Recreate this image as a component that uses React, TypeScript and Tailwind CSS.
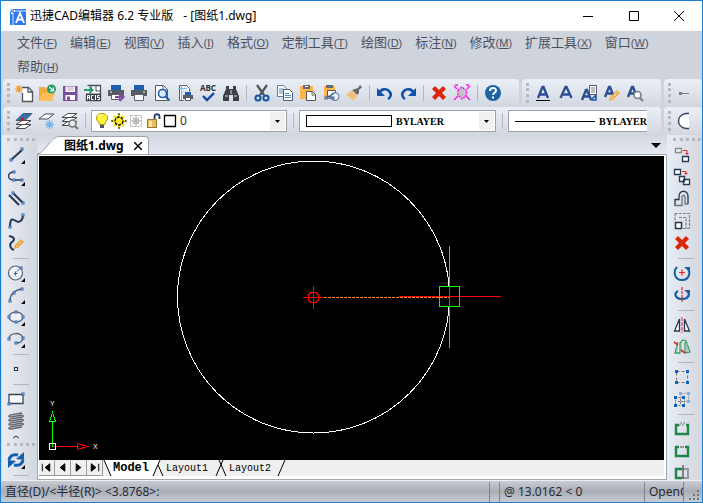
import React from 'react';

type Kids = { children: React.ReactNode };

const Glyph = ({ children }: Kids) => (
  <svg viewBox="0 0 18 18" className="h-[18px] w-[18px] shrink-0 overflow-visible" fill="none" aria-hidden="true">
    {children}
  </svg>
);

const Node = ({ x, y }: { x: number; y: number }) => (
  <rect x={x - 1} y={y - 1} width="2" height="2" fill="#fff" stroke="#2f62a8" />
);

const Corner = () => <path d="M18 14v4h-4z" fill="#000" />;

const navy = '#26384f';

const icons: Record<string, React.ReactNode> = {
  // ---------- standard toolbar ----------
  new: (
    <>
      <path d="M7 3.500H13.500L17.500 7.500V17.500H7.500V9" fill="#fff" stroke="#50545a" strokeWidth="1.300" />
      <path d="M13 3.500V8H17.500" stroke="#50545a" strokeWidth="1.300" />
      <path d="M4 1V9M0 5H8M1.200 2.200l5.600 5.600M6.800 2.200L1.200 7.800" stroke="#f0992a" strokeWidth="1.200" />
    </>
  ),
  open: (
    <>
      <path d="M1 3h6l1.500 2H13v12H1z" fill="#f3ab3b" />
      <path d="M4.500 9H17l-3 8H1z" fill="#fcbf57" />
      <circle cx="13.500" cy="5" r="4.500" fill="#259b68" />
      <path d="M11.500 3l4 4M15.500 3.500V7H12" stroke="#fff" strokeWidth="1.200" />
    </>
  ),
  save: (
    <>
      <path d="M2 2h14.500v15H2z" fill="#7d4e9e" />
      <path d="M4.500 2.500h9.500v5.500H4.500z" fill="#fff" />
      <path d="M4.500 11h9.500v5H4.500z" fill="#fff" />
      <path d="M6 4h6.500M6 6h6.500" stroke="#b79cc9" />
      <path d="M6 12.500h3V16H6z" fill="#7d4e9e" />
    </>
  ),
  acis: (
    <>
      <path d="M3.500 1.500h13v15h-14v-6" fill="#fff" stroke="#4b4f55" strokeWidth="1.300" />
      <path d="M12 2v5h4M7 2v2" stroke="#4b4f55" />
      <path d="M0 6h8M5.500 3L8.500 6l-3 3" stroke="#259b68" strokeWidth="2" />
      <path d="M2 9.500h15v7H2z" fill="#3f4348" />
      <path d="M3.500 15.500v-4h2v4M3.500 13.500h2M9.500 11.500h-2v4h2M11.500 11v5M15.500 11.500h-2v2h2v2h-2" stroke="#fff" />
    </>
  ),
  plot: (
    <>
      <path d="M4 1h10v5H4z" fill="#1d5fae" />
      <path d="M1 6h16v6H1z" fill="#555b63" />
      <path d="M3 8h2" stroke="#fff" />
      <path d="M4.500 10.500h8v5h-8z" fill="#fff" stroke="#5b6067" />
      <path d="M8 13h8M12.500 9l4 4-4 4" stroke="#7d4e9e" strokeWidth="2.200" />
    </>
  ),
  print: (
    <>
      <path d="M4 1h10v5H4z" fill="#1d5fae" />
      <path d="M1 6h16v6H1z" fill="#555b63" />
      <path d="M13 8h2" stroke="#fff" />
      <path d="M4.500 10.500h9v6h-9z" fill="#fff" stroke="#5b6067" />
    </>
  ),
  preview: (
    <>
      <path d="M2.500 1.500h8l4 4v11h-12z" fill="#fff" stroke="#555b63" />
      <path d="M10 1.500V6h4.500" stroke="#555b63" />
      <circle cx="9.500" cy="9.500" r="4" fill="#dcecff" stroke="#1d5fae" strokeWidth="1.600" />
      <path d="M12.500 12.500l4 4" stroke="#1d5fae" strokeWidth="2.200" />
    </>
  ),
  setup: (
    <>
      <path d="M3.500 1.500h7l3 3v3M3.500 1.500v15h4" stroke="#555b63" fill="#fff" />
      <path d="M5.500 1v15M2 4.500h9" stroke="#6cc0e8" />
      <path d="M9 8h6v3H9z" fill="#1d5fae" />
      <path d="M7 11h10v4H7z" fill="#555b63" />
      <path d="M9.500 13.500h5v3h-5z" fill="#fff" stroke="#555b63" />
    </>
  ),
  spell: (
    <>
      <text x="9" y="7" textAnchor="middle" fontSize="8" fontWeight="700" fill="#2c3035" fontFamily="Noto Sans, sans-serif">ABC</text>
      <path d="M4 12l4 4 7-7" stroke="#1146a8" strokeWidth="2.400" />
    </>
  ),
  find: (
    <>
      <path d="M4 2h3v3h4V2h3v3l3 7v5h-6v-6H7v6H1v-5l3-7z" fill="#3d4146" />
      <path d="M3 12h3M12 12h3M9 6v4" stroke="#d9dce2" />
    </>
  ),
  cut: (
    <>
      <path d="M4 1l7 10M14 1L7 11" stroke="#50555b" strokeWidth="2.200" />
      <circle cx="5" cy="14" r="2.600" stroke="#1557a6" strokeWidth="2" />
      <circle cx="13" cy="14" r="2.600" stroke="#1557a6" strokeWidth="2" />
    </>
  ),
  copy: (
    <>
      <path d="M1.500 1.500h6l3 3v8h-9z" fill="#fff" stroke="#5a7ba3" />
      <path d="M3 5h5M3 7h5M3 9h4" stroke="#4a86c5" />
      <path d="M7.500 5.500h6l3 3v8h-9z" fill="#fff" stroke="#4d5a6b" />
      <path d="M9 9.500h4M9 11.500h6M9 13.500h6" stroke="#4a86c5" />
    </>
  ),
  paste: (
    <>
      <path d="M1 2h13v13H1z" fill="#fbb54c" />
      <path d="M4 1h7v4H4z" fill="#666b72" />
      <path d="M6 2h3v1H6z" fill="#fff" />
      <path d="M7.500 7.500h6l3 3v6h-9z" fill="#fff" stroke="#50555b" />
      <path d="M13 7.500V11h3.500" stroke="#50555b" />
    </>
  ),
  pasteBlock: (
    <>
      <path d="M2 2h11v13H2z" fill="#fbb54c" />
      <path d="M4 1h7v3H4z" fill="#666b72" />
      <path d="M5.500 6.500h8v6h-8z" fill="#fff" stroke="#50555b" />
      <circle cx="13" cy="12.500" r="4" fill="#eef4fb" stroke="#506b93" />
      <path d="M3.500 13.500l9-4M4 14h7" stroke="#2f62a8" />
      <Node x={4} y={14} />
      <Node x={11} y={14} />
    </>
  ),
  brush: (
    <>
      <path d="M10 5l3-1 2-3 2 2-3 3 0 3-2 2-5-5z" fill="#62676e" />
      <path d="M7 6l6 6-5 5-7-6z" fill="#efc684" />
      <path d="M3 10l6 4M5 8l6 5" stroke="#e6b673" />
    </>
  ),
  undo: (
    <>
      <path d="M3 9c2-4 7-5 10-2s2 6-1 8" stroke="#0e54a8" strokeWidth="2.600" />
      <path d="M1 4v8h8z" fill="#0e54a8" />
    </>
  ),
  redo: (
    <>
      <path d="M15 9c-2-4-7-5-10-2s-2 6 1 8" stroke="#0e54a8" strokeWidth="2.600" />
      <path d="M17 4v8H9z" fill="#0e54a8" />
    </>
  ),
  erase: <path d="M2 5l3-3 4 4 4-4 3 3-4 4 4 4-3 3-4-4-4 4-3-3 4-4z" fill="#da2709" />,
  purge: (
    <>
      <path d="M5 6l4-3 5 4-1 5-4 3-4-4z" fill="#c3c3c3" stroke="#ff1cf2" strokeWidth="1.500" strokeDasharray="2 1" />
      <path d="M1 2l3 3M17 2l-3 3M1 16l4-4M17 16l-4-4M2 1h3M13 1h3" stroke="#ff1cf2" strokeWidth="1.500" />
    </>
  ),
  help: (
    <>
      <circle cx="9" cy="9" r="8" fill="#1e64a5" />
      <path d="M6 7c0-4 6-4 6-.5C12 9 9 8.500 9 11" stroke="#fff" strokeWidth="2" />
      <path d="M8 12.500h2v2H8z" fill="#fff" />
    </>
  ),
  textA: <path d="M3.500 14L8.500 3h1l5 11M5.500 10.500h7" stroke="#2c4f93" strokeWidth="2.400" />,
  textUnder: (
    <>
      <path d="M4 14L8.500 3h1L14 14M5.500 10.500h7" stroke="#2c4f93" strokeWidth="2.400" />
      <path d="M2 16.500h14" stroke="#000" />
    </>
  ),
  textPage: (
    <>
      <path d="M2 16L6 6h1l4 10M3.500 12.500h6" stroke="#2c4f93" strokeWidth="2.400" />
      <path d="M9.500 1.500h7v9h-7z" fill="#fff" stroke="#55595f" />
      <path d="M11 4h4M11 6h4M11 8h4" stroke="#777b80" />
      <path d="M16 11v5h-5M16 11l-4 4" stroke="#1557a6" strokeWidth="1.600" />
    </>
  ),
  textEdit: (
    <>
      <path d="M2 13L6 3h1l4 10M3.500 9.500h6" stroke="#2c4f93" strokeWidth="2.400" />
      <path d="M6 17l1-4 7-7 3 3-7 7z" fill="#edb04f" />
      <path d="M8 15l7-7" stroke="#fff" strokeDasharray="1 1" />
    </>
  ),
  textFind: (
    <>
      <path d="M2 13L6 3h1l4 10M3.500 9.500h6" stroke="#2c4f93" strokeWidth="2.400" />
      <circle cx="11.500" cy="11" r="3.500" fill="#fff" stroke="#777c82" strokeWidth="1.600" />
      <path d="M14 14l3 3" stroke="#777c82" strokeWidth="2.200" />
    </>
  ),
  dimension: (
    <>
      <path d="M3 8h3v3H3z" fill="#7c7c7c" />
      <path d="M6 9.500h7" stroke="#7c7c7c" />
    </>
  ),

  // ---------- layers ----------
  layers: (
    <>
      <path d="M1 16.500h9l6-4H7zM1 12.500h9l6-4H7z" fill="#fff" stroke="#454a50" />
      <path d="M1 8.500h9l7-7H8z" fill="#3c6ea5" stroke="#3c5c80" />
      <path d="M6 6h3v3H6z" fill="#f00" />
    </>
  ),
  layerFreeze: (
    <>
      <path d="M1 7h9l6-5H7z" fill="#fff" stroke="#454a50" />
      <path d="M11.500 8v9M7 12.500h9M8.500 9.500l6 6M14.500 9.500l-6 6" stroke="#70b5ef" strokeWidth="1.300" />
    </>
  ),
  layerFind: (
    <>
      <path d="M1 13.500h9l6-4H7zM1 9.500h9l6-4H7zM1 5.500h9l6-4H7z" fill="#fff" stroke="#454a50" />
      <circle cx="11.500" cy="11.500" r="3.500" fill="#e5e7eb" stroke="#73777c" strokeWidth="1.500" />
      <path d="M14 14l3 3" stroke="#73777c" strokeWidth="2" />
    </>
  ),
  bulb: (
    <>
      <path d="M9 1.500c-4 0-5.500 2.500-5.500 4.500C3.500 9 6 10 6.500 12.500h5C12 10 14.500 9 14.500 6c0-2-1.500-4.500-5.500-4.500z" fill="#fff43a" stroke="#a39600" />
      <path d="M6 4c1-1 2-1 3-1" stroke="#fff" strokeWidth="1.500" />
      <path d="M7 13h4v3H7z" fill="#55595f" />
    </>
  ),
  sun: (
    <>
      <path d="M9 2v14M2 9h14M4 4l10 10M14 4L4 14" stroke="#eee000" strokeWidth="2.500" />
      <circle cx="9" cy="9" r="4" fill="#ffee20" stroke="#000" strokeWidth="1.300" strokeDasharray="3 1" />
      <path d="M8 2h2M8 16h2M2 8v2M16 8v2" stroke="#000" />
    </>
  ),
  viewFreeze: (
    <>
      <path d="M3.500 3.500h11v11h-11z" stroke="#aaa" strokeDasharray="2 1" />
      <path d="M9 4v10M4 9h10M5.500 5.500l7 7M12.500 5.500l-7 7" stroke="#aaa" />
      <circle cx="9" cy="9" r="2.500" stroke="#aaa" />
    </>
  ),
  lock: (
    <>
      <path d="M10.500 8V4.500c0-3 5-3 5 0V7" stroke="#283a78" strokeWidth="1.800" />
      <path d="M3.500 7.500h9v8h-9z" fill="#e9bd62" stroke="#9b7330" />
      <path d="M5 9h3v6H5z" fill="#f8e4aa" />
    </>
  ),
  swatch: <path d="M3.500 3.500h11v11h-11z" fill="#fff" stroke="#000" strokeWidth="1.300" />,
  arcHalf: (
    <>
      <path d="M13 1.500C0 2 0 16 13 16.500z" fill="#fff" />
      <path d="M13 1.500h-3C0 3 0 15 10 16.500h3" stroke="#35455a" strokeWidth="1.400" />
    </>
  ),

  // ---------- draw ----------
  line: (
    <>
      <path d="M4 14L15 4" stroke={navy} strokeWidth="2" />
      <Node x={4} y={14} />
      <Node x={15} y={3} />
      <Corner />
    </>
  ),
  polyline: (
    <>
      <path d="M7 4C0 4 0 12 6 12h10" stroke={navy} strokeWidth="1.300" />
      <Node x={7} y={4} />
      <Node x={7} y={12} />
      <Node x={15} y={12} />
      <Corner />
    </>
  ),
  mline: (
    <>
      <path d="M2 5l10 10M6 3l10 10" stroke={navy} strokeWidth="2" />
      <Node x={6} y={3} />
      <Node x={16} y={13} />
    </>
  ),
  spline: (
    <>
      <path d="M3 15C3 5 6 7 9 9s7 0 7-6" stroke={navy} strokeWidth="2" />
      <Node x={3} y={15} />
      <Node x={16} y={3} />
    </>
  ),
  sketch: (
    <>
      <path d="M2 2c6 1 6 4 3 6s-2 7 2 8" stroke={navy} strokeWidth="2" />
      <path d="M7 15l1-4 6-6 3 3-6 6z" fill="#eda83c" />
      <path d="M9 13l6-6" stroke="#fff" strokeDasharray="1 1" />
    </>
  ),
  circle: (
    <>
      <circle cx="8.500" cy="9" r="7" fill="#eef2f8" stroke="#536070" strokeWidth="1.200" />
      <path d="M8 9l6-5" stroke="#1557a6" strokeDasharray="2 1" />
      <path d="M6.500 9.500h4M8.500 7.500v4" stroke="#2f62a8" />
      <Node x={14} y={4} />
      <Corner />
    </>
  ),
  arc: (
    <>
      <path d="M3 15C3 9 7 4 15 3" stroke="#536070" strokeWidth="1.500" />
      <Node x={3} y={15} />
      <Node x={7} y={7} />
      <Node x={15} y={3} />
      <Corner />
    </>
  ),
  ellipse: (
    <>
      <ellipse cx="9" cy="9" rx="7" ry="5" fill="#eef2f8" stroke="#536070" strokeWidth="1.300" />
      <Node x={2} y={9} />
      <Node x={9} y={4} />
      <Node x={16} y={9} />
      <Node x={9} y={14} />
      <Corner />
    </>
  ),
  ellipseArc: (
    <>
      <path d="M2 9c0-7 13-7 14-1 0 3-3 5-7 5" stroke="#536070" strokeWidth="1.500" />
      <Node x={2} y={9} />
      <Node x={9} y={13} />
      <Node x={16} y={8} />
      <Corner />
    </>
  ),
  point: <path d="M7.500 7.500h3v3h-3z" fill="#fff" stroke={navy} strokeWidth="1.200" />,
  rect: (
    <>
      <path d="M2 4.500h14v9H2z" fill="#f7f9fc" stroke="#35455a" strokeWidth="1.300" />
      <Node x={2} y={14} />
      <Node x={16} y={4} />
    </>
  ),
  spring: (
    <path d="M15 1L3 3q-3 2 1 2l11-2q3 1 0 2L3 7q-3 2 1 2l11-2q3 1 0 2L3 11q-3 2 1 2l11-2q3 1 0 2L3 15q-3 2 1 2l11-2" stroke="#62676d" strokeWidth="1.300" />
  ),
  refresh: (
    <>
      <path d="M2 9c1-5 5-6 9-5M16 9c-1 5-5 6-9 5" stroke="#1260ad" strokeWidth="3" />
      <path d="M9 8l8-7v8zM9 10l-8 7V9z" fill="#1260ad" />
      <Corner />
    </>
  ),

  // ---------- modify ----------
  copyObj: (
    <>
      <path d="M2.500 2.500h6v4h-6z" fill="#f4f4f4" stroke="#8a8a8a" strokeWidth="1.400" />
      <path d="M10 4.500h4V8" stroke="#e8272c" />
      <path d="M12 7h4l-2 2z" fill="#e8272c" />
      <path d="M9.500 10.500h6v5h-6z" fill="#fff" stroke={navy} strokeWidth="1.300" />
    </>
  ),
  copyMany: (
    <>
      <path d="M1.500 1.500h6v5h-6z" fill="#fff" stroke={navy} strokeWidth="1.300" />
      <path d="M9 3.500h4V6" stroke="#e8272c" />
      <path d="M11 5h4l-2 2z" fill="#e8272c" />
      <path d="M6.500 8.500h5v5h-5zM10.500 11.500h6v5h-6z" fill="#fff" stroke={navy} strokeWidth="1.300" />
    </>
  ),
  offset: (
    <>
      <path d="M2 16V9.500h4V6.500c0-7 9-7 9 0V14" stroke={navy} strokeWidth="1.300" />
      <path d="M2 15.500h7V7c0-2 3-2 3 0v7h3" stroke="#6d7178" strokeWidth="1.300" />
    </>
  ),
  scale: (
    <>
      <path d="M2 1.500h14.500v15M2 1.500V9M10 16.500h6M6 5.500h7v11" stroke="#858585" strokeWidth="1.200" strokeDasharray="3 1" />
      <path d="M2.500 10.500h6v6h-6z" fill="#fff" stroke={navy} strokeWidth="1.500" />
    </>
  ),
  rotate: (
    <>
      <path d="M4 3C0 7 1 16 9 16s9-9 5-12" stroke="#17619d" strokeWidth="2" />
      <path d="M11 3h6v5z" fill="#17619d" />
      <path d="M6 8.500h6M9 5.500v6" stroke="#e8272c" strokeWidth="1.200" />
    </>
  ),
  rotate3d: (
    <>
      <path d="M5 5C0 8 3 13 9 13s8-4 6-6" stroke="#17619d" strokeWidth="2.200" />
      <path d="M11 4h6v5z" fill="#17619d" />
      <path d="M9 1v16" stroke="#e8272c" strokeWidth="1.200" strokeDasharray="3 1" />
    </>
  ),
  mirror: (
    <>
      <path d="M6.500 3v12h-5zM11.500 3v12h5z" fill="#fff" stroke={navy} strokeWidth="1.300" />
      <path d="M9 1v16" stroke="#e8272c" strokeDasharray="4 1" />
    </>
  ),
  mirror3d: (
    <>
      <path d="M5 4L2 15h5V5l3-3 3 1 4 11-5 1V4" fill="#e6f2eb" stroke="#3f9b66" strokeWidth="1.300" />
      <path d="M8 5v9M14 5v9M4 8v7" stroke="#72ad8b" />
      <path d="M1 4l4 3M8 12l4 3" stroke="#e8272c" strokeWidth="1.600" />
    </>
  ),
  array: (
    <>
      <path d="M3.500 3.500h11v11h-11z" stroke="#777" strokeDasharray="3 2" />
      <path d="M2 2h3v3H2zM13 2h3v3h-3zM2 13h3v3H2zM13 13h3v3h-3z" fill="#1462bd" />
    </>
  ),
  array3d: (
    <>
      <path d="M7.500 3.500h8v8h-8z" stroke="#9aa4b0" strokeDasharray="2 1" />
      <path d="M6 2h3v3H6zM14 2h3v3h-3zM14 10h3v3h-3z" fill="#7fb0e6" />
      <path d="M2.500 7.500h9v8h-9zM5 11.500h5M7.500 9v5" stroke="#777" strokeDasharray="2 1" />
      <path d="M1 6h3v3H1zM9 6h3v3H9zM1 14h3v3H1zM9 14h3v3H9z" fill="#1462bd" />
    </>
  ),
  breakAt: (
    <>
      <path d="M6 5H3v9h12V5h-2" stroke="#1f8549" strokeWidth="2.400" />
      <path d="M6 6l3-4M9 6l3-4" stroke="#777" />
    </>
  ),
  breakTwo: (
    <>
      <path d="M6 5H3v9h12V5h-3" stroke="#1f8549" strokeWidth="2.400" />
      <path d="M7 5h4" stroke="#999" strokeWidth="2" />
    </>
  ),
  join: (
    <>
      <path d="M9 5H3v9h6" stroke="#1f8549" strokeWidth="2.400" />
      <path d="M10 5h5v9h-5" stroke="#999" strokeWidth="2" />
      <path d="M10 1v14" stroke="#222" />
    </>
  ),
};

const Tool = ({ name }: { name: string }) => (
  <button type="button" aria-label={name} className="flex h-[22px] w-[23px] shrink-0 items-center justify-center">
    <Glyph>{icons[name]}</Glyph>
  </button>
);

const Grip = () => <span className="ml-1 h-5 w-[5px] shrink-0 border-l-3 border-dotted border-[#b3b8c1]" />;

const VSep = () => (
  <span className="flex w-2 shrink-0 justify-center">
    <span className="h-4 w-px bg-[#b3b7be]" />
  </span>
);

const HSep = () => (
  <span className="flex h-2 shrink-0 items-center justify-center">
    <span className="h-px w-4 bg-[#b3b7be]" />
  </span>
);

const HGrip = () => (
  <span className="flex h-[9px] shrink-0 items-center">
    <span className="ml-[3px] w-7 border-t-3 border-dotted border-[#b3b8c1]" />
  </span>
);

const Band = ({ children, className = '' }: Kids & { className?: string }) => (
  <div className={`flex h-7 items-center overflow-hidden rounded-sm bg-linear-to-b from-[#ebeff7] to-[#d2d6df] ${className}`}>
    {children}
  </div>
);

const Arrow = () => (
  <span className="pointer-events-none flex h-full w-[15px] shrink-0 items-center justify-center bg-[#f0f0f0]">
    <svg width="5" height="3" aria-hidden="true"><path d="M0 0h5L2.500 3z" /></svg>
  </span>
);

const combo = 'flex h-[22px] items-center border border-[#9da0a5] bg-white p-px';
const lineCombo = "ml-1 appearance-none font-['Liberation_Serif',serif] text-[10px] font-semibold text-black";

const menus = [
  ['文件', 'F'], ['编辑', 'E'], ['视图', 'V'], ['插入', 'I'], ['格式', 'O'], ['定制工具', 'T'],
  ['绘图', 'D'], ['标注', 'N'], ['修改', 'M'], ['扩展工具', 'X'], ['窗口', 'W'], ['帮助', 'H'],
];

const standard = [
  ['new', 'open', 'save', 'acis', 'plot', 'print', 'preview', 'setup', 'spell', 'find'],
  ['cut', 'copy', 'paste', 'pasteBlock', 'brush'],
  ['undo', 'redo'],
  ['erase', 'purge'],
  ['help'],
];

const draw = [
  ['line', 'polyline', 'mline', 'spline', 'sketch'],
  ['circle', 'arc', 'ellipse', 'ellipseArc'],
  ['point'],
  ['rect', 'spring'],
];

const modify = [
  ['copyObj', 'copyMany', 'offset', 'scale', 'erase'],
  ['rotate', 'rotate3d'],
  ['mirror', 'mirror3d'],
  ['array', 'array3d'],
  ['breakAt', 'breakTwo', 'join'],
];

const TitleBar = () => (
  <header className="flex h-[30px] shrink-0 items-center bg-white pl-2 text-xs text-black">
    <svg width="17" height="17" viewBox="0 0 17 17" className="mr-1" fill="none" aria-hidden="true">
      <path d="M3 1h14v16H1V4z" fill="#3079ed" />
      <path d="M4 5v12M5 3h12" stroke="#d5e5ff" />
      <path d="M7 15l4-10 4 10M8 11.500h6" stroke="#fff" strokeWidth="1.800" />
      <path d="M3 0v6M0 3h6" stroke="#fff" strokeWidth="2" />
      <path d="M3 1v4M1 3h4" stroke="#3079ed" />
    </svg>
    <h1 className="flex flex-1 gap-2.5">
      <span>迅捷CAD编辑器 6.2 专业版</span>
      <span>- [图纸1.dwg]</span>
    </h1>
    <button type="button" aria-label="最小化" className="flex w-[46px] justify-center">
      <svg width="10" height="10"><path d="M0 5.500h10" stroke="#000" /></svg>
    </button>
    <button type="button" aria-label="最大化" className="flex w-[45px] justify-center">
      <svg width="10" height="10" fill="none"><path d="M.5.500h9v9h-9z" stroke="#000" /></svg>
    </button>
    <button type="button" aria-label="关闭" className="flex w-[46px] justify-center">
      <svg width="10" height="10"><path d="M0 0l10 10M10 0L0 10" stroke="#000" /></svg>
    </button>
  </header>
);

const MenuBar = () => (
  <nav className="flex shrink-0 flex-wrap gap-x-[13px] pr-9 pl-4 text-[13px] text-[#4c5260]">
    {menus.map(([label, key]) => (
      <button type="button" key={key} className="flex h-6 items-center">
        {label}
        <span className="font-['Liberation_Sans',sans-serif] text-[11px]">
          (<u>{key}</u>)
        </span>
      </button>
    ))}
  </nav>
);

const Toolbars = () => (
  <div className="flex shrink-0 flex-col pl-0.5">
    <div className="flex gap-[3px]">
      <Band className="pr-[15px]">
        <Grip />
        {standard.map((group, i) => (
          <React.Fragment key={i}>
            {i > 0 && <VSep />}
            {group.map((name) => <Tool key={name} name={name} />)}
          </React.Fragment>
        ))}
      </Band>
      <Band className="flex-1">
        <Grip />
        {['textUnder', 'textA', 'textPage', 'textEdit', 'textFind'].map((name) => <Tool key={name} name={name} />)}
      </Band>
      <Band className="w-[38px]">
        <Grip />
        <Tool name="dimension" />
      </Band>
    </div>

    <div className="flex gap-[3px]">
      <Band className="min-w-0 flex-1">
        <Grip />
        {['layers', 'layerFreeze', 'layerFind'].map((name) => <Tool key={name} name={name} />)}
        <VSep />
        <div className={`${combo} ml-0.5 w-[196px] shrink-0`}>
          {['bulb', 'sun', 'viewFreeze', 'lock', 'swatch'].map((name) => (
            <span key={name} className="flex w-[17px] shrink-0 justify-center">
              <Glyph>{icons[name]}</Glyph>
            </span>
          ))}
          <select aria-label="图层" className="ml-0.5 min-w-0 flex-1 appearance-none bg-transparent text-xs text-[#333]">
            <option>0</option>
          </select>
          <Arrow />
        </div>
        <span className="mx-0.5 flex"><VSep /></span>
        <div className={`${combo} w-[197px] shrink-0 pl-1.5`}>
          <span className="h-3 w-[86px] shrink-0 border border-black" />
          <select aria-label="颜色" className={`${lineCombo} min-w-0 flex-1`}>
            <option>BYLAYER</option>
          </select>
          <Arrow />
        </div>
        <span className="mx-0.5 flex"><VSep /></span>
        <div className={`${combo} mr-[14px] min-w-0 flex-1 border-r-0 pr-0 pl-1.5`}>
          <span className="h-px min-w-0 flex-1 bg-black" />
          <select aria-label="线型" className={`${lineCombo} shrink-0`}>
            <option>BYLAYER</option>
          </select>
        </div>
      </Band>
      <Band className="w-[38px]">
        <Grip />
        <Tool name="arcHalf" />
      </Band>
    </div>
  </div>
);

const Drawing = () => (
  <svg className="block min-h-0 w-full flex-1 bg-black" fill="none" shapeRendering="crispEdges" role="img" aria-label="图纸1">
    <circle cx="274.500" cy="141" r="136" stroke="#fff" />
    <circle cx="274.500" cy="141.500" r="5.500" stroke="#f00" />
    <path d="M264 141.500h21M274.500 130v23" stroke="#f00" />
    <path d="M285 141.500h125" stroke="#ff8530" strokeDasharray="3 1" />
    <path d="M360 140.500h102" stroke="#f00" />
    <path d="M410.500 90v102" stroke="#0f0" />
    <path d="M410.500 127v28" stroke="#f0f" />
    <path d="M400.500 130.500h20v20h-20z" stroke="#0f0" />

    <path d="M13.500 291V265" stroke="#0f0" />
    <path d="M10.500 265.500l3-9 3 9z" stroke="#0f0" />
    <path d="M14 290.500h24" stroke="#f00" />
    <path d="M38.500 287.500l10 3-10 3z" stroke="#f00" />
    <path d="M10.500 287.500h6v6h-6z" stroke="#fff" />
    <text x="11" y="250" fontSize="7" fill="#fff" fontFamily="Liberation Sans, sans-serif">Y</text>
    <text x="54" y="293" fontSize="7" fill="#fff" fontFamily="Liberation Sans, sans-serif">X</text>
  </svg>
);

const navArrows = ['M3 4v8M11 4v8L6 8z', 'M10 4v8L5 8z', 'M5 4v8l5-4z', 'M4 4v8l5-4zM12 4v8'];

const LayoutTabs = () => (
  <div className="flex h-4 shrink-0 items-center bg-[#efefef] font-['Liberation_Mono',monospace] text-[10px] text-black">
    {navArrows.map((d) => (
      <button type="button" key={d} aria-label="布局导航" className="h-4 w-4 border-r border-b border-[#9b9b9b]">
        <svg width="15" height="15" viewBox="0 0 15 16"><path d={d} stroke="#000" /></svg>
      </button>
    ))}
    <svg width="10" height="16" fill="none">
      <path d="M1 0l7 16h2V0z" fill="#fff" />
      <path d="M1 0l7 16" stroke="#000" />
    </svg>
    <button type="button" className="flex h-4 items-center bg-white text-xs font-bold">Model</button>
    <svg width="17" height="16" fill="none">
      <path d="M0 0h11L4 16H0z" fill="#fff" />
      <path d="M11 0L4 16M9 5l5 11" stroke="#000" />
    </svg>
    <button type="button" className="h-4">Layout1</button>
    <svg width="21" height="16" fill="none">
      <path d="M15 0L8 16M11 0l7 16" stroke="#000" />
    </svg>
    <button type="button" className="h-4">Layout2</button>
    <svg width="16" height="16" fill="none"><path d="M14 0L7 16" stroke="#000" /></svg>
  </div>
);

const Workspace = () => (
  <main className="flex min-w-0 flex-1 flex-col">
    <div className="flex h-[19px] shrink-0 items-end justify-between bg-linear-to-b from-[#d3d7e0] to-[#e4e8f0]">
      <div className="flex h-[18px] items-center">
        <svg width="27" height="18" fill="none" aria-hidden="true">
          <path d="M0 18C8 17 14 0 22 0h5v18z" fill="#fff" />
          <path d="M0 18C8 17 14 .5 22 .5h5" stroke="#9da2ab" />
        </svg>
        <div className="flex h-[18px] items-center gap-2 rounded-tr-sm border-t border-r border-[#9da2ab] bg-white pr-1">
          <button type="button" className="text-xs font-bold text-black">图纸1.dwg</button>
          <button type="button" aria-label="关闭图纸" className="p-0.5">
            <svg width="8" height="8"><path d="M0 0l8 8M8 0L0 8" stroke="#000" strokeWidth="1.500" /></svg>
          </button>
        </div>
      </div>
      <button type="button" aria-label="图纸列表" className="mr-[6px] mb-1.5">
        <svg width="10" height="5"><path d="M0 0h10L5 5z" /></svg>
      </button>
    </div>
    <div className="flex min-h-0 flex-1 flex-col border border-[#a4a8b0] bg-white pt-px pr-0.5 pb-[3px] pl-px">
      <Drawing />
      <LayoutTabs />
    </div>
  </main>
);

const side = 'flex shrink-0 flex-col overflow-hidden bg-linear-to-r from-[#e8ecf4] to-[#d3d7e0]';

const StatusBar = () => (
  <footer className="flex h-[22px] shrink-0 items-center border-t border-[#eceef2] bg-linear-to-b from-[#c9ccd2] via-[#a9adb6] to-[#c8ccd3] text-xs text-[#262b33]">
    <input aria-label="命令" readOnly defaultValue="直径(D)/<半径(R)> <3.8768>:" className="min-w-0 flex-1 bg-transparent pl-1 outline-none" />
    <span className="h-5 w-[11px] border-x border-[#7f848d]" />
    <span className="h-5 w-[144px] pl-1 leading-5">@ 13.0162 &lt; 0</span>
    <span className="h-5 w-10 overflow-hidden border-x border-[#7f848d] pl-1 leading-5">OpenG</span>
    <svg width="18" height="20" fill="#6f747d" aria-hidden="true">
      <path d="M13 8h2v2h-2zM9 12h2v2H9zM13 12h2v2h-2zM5 16h2v2H5zM9 16h2v2H9zM13 16h2v2h-2z" />
    </svg>
  </footer>
);

const App: React.FC = () => {
  return (
    <div className="flex h-screen w-full flex-col overflow-hidden border border-[#1b7fd3] bg-[#cfd3dc] font-['Noto_Sans','Noto_Sans_CJK_SC',sans-serif]">
      <TitleBar />
      <MenuBar />
      <Toolbars />
      <div className="flex min-h-0 flex-1 pl-px">
        <aside className={`${side} w-[35px] pl-0.5`}>
          <HGrip />
          {draw.map((group, i) => (
            <React.Fragment key={i}>
              {i > 0 && <HSep />}
              {group.map((name) => <Tool key={name} name={name} />)}
            </React.Fragment>
          ))}
          <svg width="23" height="6" fill="none" className="mt-0.5 shrink-0"><path d="M9 4l3-2 3 2" stroke="#333" /></svg>
          <HGrip />
          <Tool name="refresh" />
          <HSep />
        </aside>
        <Workspace />
        <aside className={`${side} w-[35px] pl-[3px]`}>
          <HGrip />
          {modify.map((group, i) => (
            <React.Fragment key={i}>
              {i > 0 && <HSep />}
              {group.map((name) => <Tool key={name} name={name} />)}
            </React.Fragment>
          ))}
        </aside>
      </div>
      <StatusBar />
    </div>
  );
};

export default App;
